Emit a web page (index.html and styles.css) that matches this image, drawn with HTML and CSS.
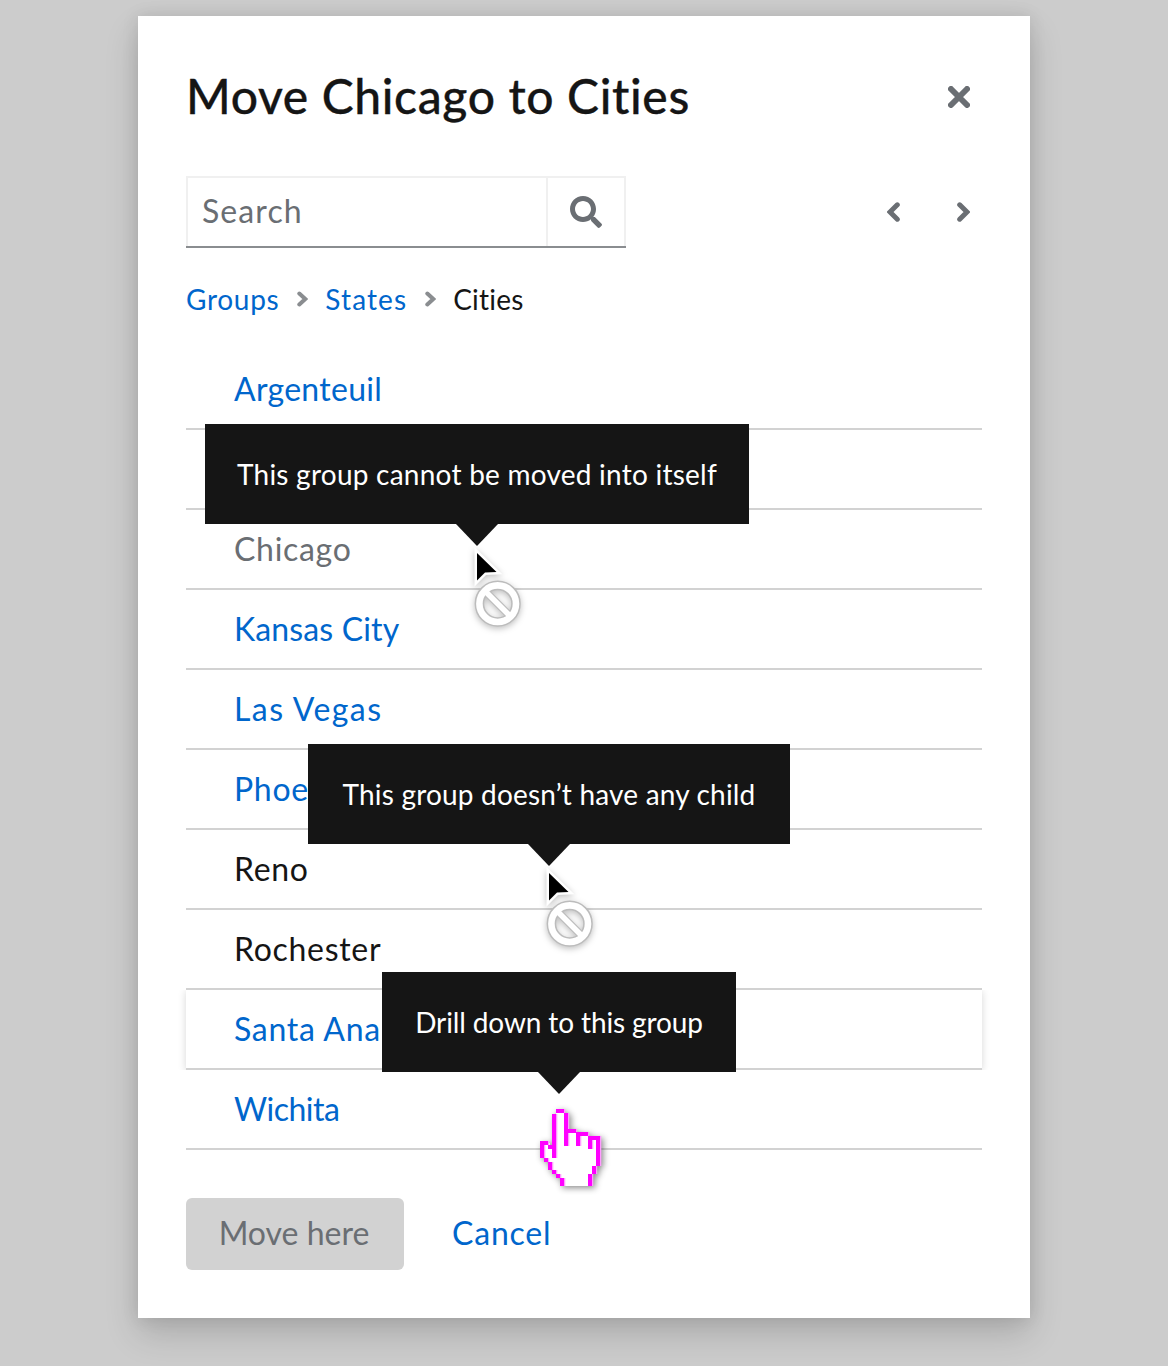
FILE: index.html
```
<!DOCTYPE html>
<html lang="en">
<head>
<meta charset="utf-8">
<title>Move Chicago to Cities</title>
<link rel="stylesheet" href="styles.css">
</head>
<body>
<main class="modal">
  <header class="modal-header">
    <h1 class="title">Move Chicago to Cities</h1>
    <svg class="close" viewBox="0 0 22 22" width="22" height="22"><path d="M3 3 19 19M19 3 3 19"/></svg>
  </header>
  <div class="toolbar">
    <div class="search">
      <span class="search-input">Search</span>
      <span class="search-button"><svg viewBox="0 0 512 512" width="32" height="32"><path d="M505 442.700 405.300 343c-4.500-4.500-10.600-7-17-7H372c27.600-35.300 44-79.700 44-128C416 93.100 322.900 0 208 0S0 93.100 0 208s93.100 208 208 208c48.300 0 92.700-16.400 128-44v16.300c0 6.400 2.500 12.500 7 17l99.700 99.700c9.400 9.400 24.600 9.400 33.900 0l28.300-28.300c9.400-9.400 9.400-24.600.1-34zM208 336c-70.700 0-128-57.200-128-128 0-70.700 57.200-128 128-128 70.700 0 128 57.200 128 128 0 70.700-57.200 128-128 128z"/></svg></span>
    </div>
    <div class="pager">
      <svg class="chevron" viewBox="0 0 13 20" width="13" height="20"><path d="M10.300 2.800 3 10l7.300 7.200"/></svg>
      <svg class="chevron" viewBox="0 0 13 20" width="13" height="20"><path d="M2.700 2.800 10 10l-7.300 7.200"/></svg>
    </div>
  </div>
  <nav class="breadcrumb">
    <a class="groups">Groups</a>
    <svg viewBox="0 0 11 16" width="11" height="16"><path d="M2.300 2.500 8.300 8l-6 5.500"/></svg>
    <a class="states">States</a>
    <svg viewBox="0 0 11 16" width="11" height="16"><path d="M2.300 2.500 8.300 8l-6 5.500"/></svg>
    <span class="current">Cities</span>
  </nav>
  <ul class="list">
    <li class="row"><span class="label">Argenteuil</span></li>
    <li class="row"></li>
    <li class="row disabled"><span class="label">Chicago</span>
      <div class="tip tip-itself">This group cannot be moved into itself</div>
      <svg class="cursor cursor-itself" viewBox="0 0 60 95" width="60" height="95"><use href="#blocked"/></svg>
    </li>
    <li class="row tight"><span class="label">Kansas City</span></li>
    <li class="row loose"><span class="label">Las Vegas</span></li>
    <li class="row"><span class="label">Phoenix</span></li>
    <li class="row plain"><span class="label">Reno</span>
      <div class="tip tip-child">This group doesn’t have any child</div>
      <svg class="cursor cursor-child" viewBox="0 0 60 95" width="60" height="95"><use href="#blocked"/></svg>
    </li>
    <li class="row plain"><span class="label">Rochester</span></li>
    <li class="row hovered"><span class="label">Santa Ana</span></li>
    <li class="row narrow"><span class="label">Wichita</span>
      <div class="tip tip-drill">Drill down to this group</div>
      <svg class="cursor cursor-drill" viewBox="536 1104 76 94" width="76" height="94">
        <path fill="#fff" d="M556 1112h9v19h12v4h12v4h9v27h-4v8h-4v12h-28v-8h-4v-4h-4v-4h-4v-8h-4v-4h-4v-15h8v4h6z"/>
        <use href="#hand-outline" x="1.300" fill="#ff9cff"/>
        <use href="#hand-outline" fill="#f0f"/>
      </svg>
    </li>
  </ul>
  <footer class="actions">
    <button class="primary" disabled>Move here</button>
    <a class="cancel">Cancel</a>
  </footer>
</main>
<svg class="defs" width="0" height="0">
  <defs>
    <g id="blocked">
      <path d="M9 13v27.500l8-8 11.500-.5z" fill="#000" stroke="#fff" stroke-width="5" paint-order="stroke"/>
      <g fill="none">
        <circle cx="29.700" cy="63.700" r="18.300" stroke="#bcbcbc" stroke-width="9.600"/>
        <path d="M17 51 42.500 76.500" stroke="#bcbcbc" stroke-width="8"/>
        <circle cx="29.700" cy="63.700" r="18.300" stroke="#fff" stroke-width="6.600"/>
        <path d="M17 51 42.500 76.500" stroke="#fff" stroke-width="5.500"/>
      </g>
    </g>
    <path id="hand-outline" d="M556 1109h8v4h-8zM552 1114h4v44h-4zM564 1113h4v33h-4zM568 1129h8v4h-8zM576 1132h4v14h-4zM580 1132h8v4h-8zM588 1136h4v13h-4zM592 1136h8v4h-8zM596 1140h4v26h-4zM592 1166h4v8h-4zM588 1174h4v12h-4zM540 1141h8v4h-8zM540 1145h4v13h-4zM548 1145h4v4h-4zM544 1158h4v4h-4zM548 1162h4v8h-4zM552 1170h4v4h-4zM556 1174h4v4h-4zM560 1178h4v8h-4z"/>
  </defs>
</svg>
</body>
</html>
```
FILE: styles.css
```
* { box-sizing: border-box; }
body { margin: 0; padding: 16px 138px 48px; background: #ccc; font: 32px/48px Lato, sans-serif; font-variant-ligatures: none; color: #151515; }
.modal { height: 1302px; padding: 48px; background: #fff; box-shadow: 0 16px 32px rgba(3,3,3,.16), 0 0 16px rgba(3,3,3,.1); }
.modal-header { display: flex; justify-content: space-between; align-items: center; height: 66px; padding-right: 12px; }
.title { margin: 0; padding-bottom: 2px; font-size: 48px; font-weight: 500; line-height: 62px; letter-spacing: .65px; -webkit-text-stroke: .3px #151515; }
.close { stroke: #6a6e73; stroke-width: 6; stroke-linecap: round; fill: none; }
.toolbar { display: flex; justify-content: space-between; align-items: center; height: 72px; margin-top: 46px; padding-right: 12px; }
.search { display: flex; width: 440px; height: 72px; border-bottom: 2px solid #8a8d90; }
.search-input { flex: 1; padding: 9px 14px; border: solid #f0f0f0; border-width: 2px 0 0 2px; color: #6a6e73; letter-spacing: 1.1px; }
.search-button { display: grid; place-items: center; width: 80px; border: 2px solid #f0f0f0; border-bottom: 0; fill: #6a6e73; }
.pager { display: flex; gap: 57px; }
.chevron { fill: none; stroke: #6a6e73; stroke-width: 5; stroke-linecap: round; }
.breadcrumb { display: flex; align-items: center; gap: 17.5px; height: 42px; margin-top: 30px; font-size: 28px; line-height: 42px; letter-spacing: .7px; }
.breadcrumb svg { margin-top: -1px; fill: none; stroke: #8a8d90; stroke-width: 4; stroke-linecap: round; }
.breadcrumb .states { letter-spacing: 1.1px; }
.breadcrumb .current { letter-spacing: .2px; }
.breadcrumb a, .cancel { color: #06c; }
.list { margin: 30px 0 0; padding: 0; list-style: none; }
.row { position: relative; height: 80px; padding: 15px 48px; border-bottom: 2px solid #d2d2d2; color: #06c; letter-spacing: .7px; }
.row:first-child { letter-spacing: .3px; }
.row.tight { letter-spacing: .15px; }
.row.loose { letter-spacing: 1.4px; }
.row.narrow { letter-spacing: -.5px; }
.row.disabled { color: #6a6e73; }
.row.plain { color: #151515; }
.hovered { box-shadow: 0 1px 8px rgba(3,3,3,.16); clip-path: inset(0 -10px); }
.tip { position: absolute; z-index: 2; height: 100px; background: #151515; color: #fff; font-size: 28px; line-height: 100px; text-align: center; white-space: nowrap; }
.tip::after { content: ""; position: absolute; left: 50%; top: 100%; margin-left: -21px; border: solid transparent; border-width: 22px 21px 0; border-top-color: #151515; }
.tip-itself { left: 19px; top: -86px; width: 544px; letter-spacing: .24px; }
.tip-child { left: 122px; top: -86px; width: 482px; letter-spacing: .19px; }
.tip-drill { left: 196px; top: -98px; width: 354px; letter-spacing: -.12px; }
.cursor { position: absolute; z-index: 3; filter: drop-shadow(0 2px 3px rgba(0,0,0,.25)); }
.cursor-itself { left: 282px; top: 30px; }
.cursor-child { left: 354px; top: 30px; }
.cursor-drill { left: 350px; top: 34px; filter: drop-shadow(2px 2px 3px rgba(0,0,0,.45)); }
.actions { display: flex; align-items: center; gap: 48px; margin-top: 48px; }
.primary { width: 218px; height: 72px; padding: 0 2px 2px 0; border: 0; border-radius: 6px; background: #d2d2d2; color: #6a6e73; font: inherit; }
.cancel { padding-bottom: 2px; letter-spacing: .8px; }
.defs { position: absolute; }
```
